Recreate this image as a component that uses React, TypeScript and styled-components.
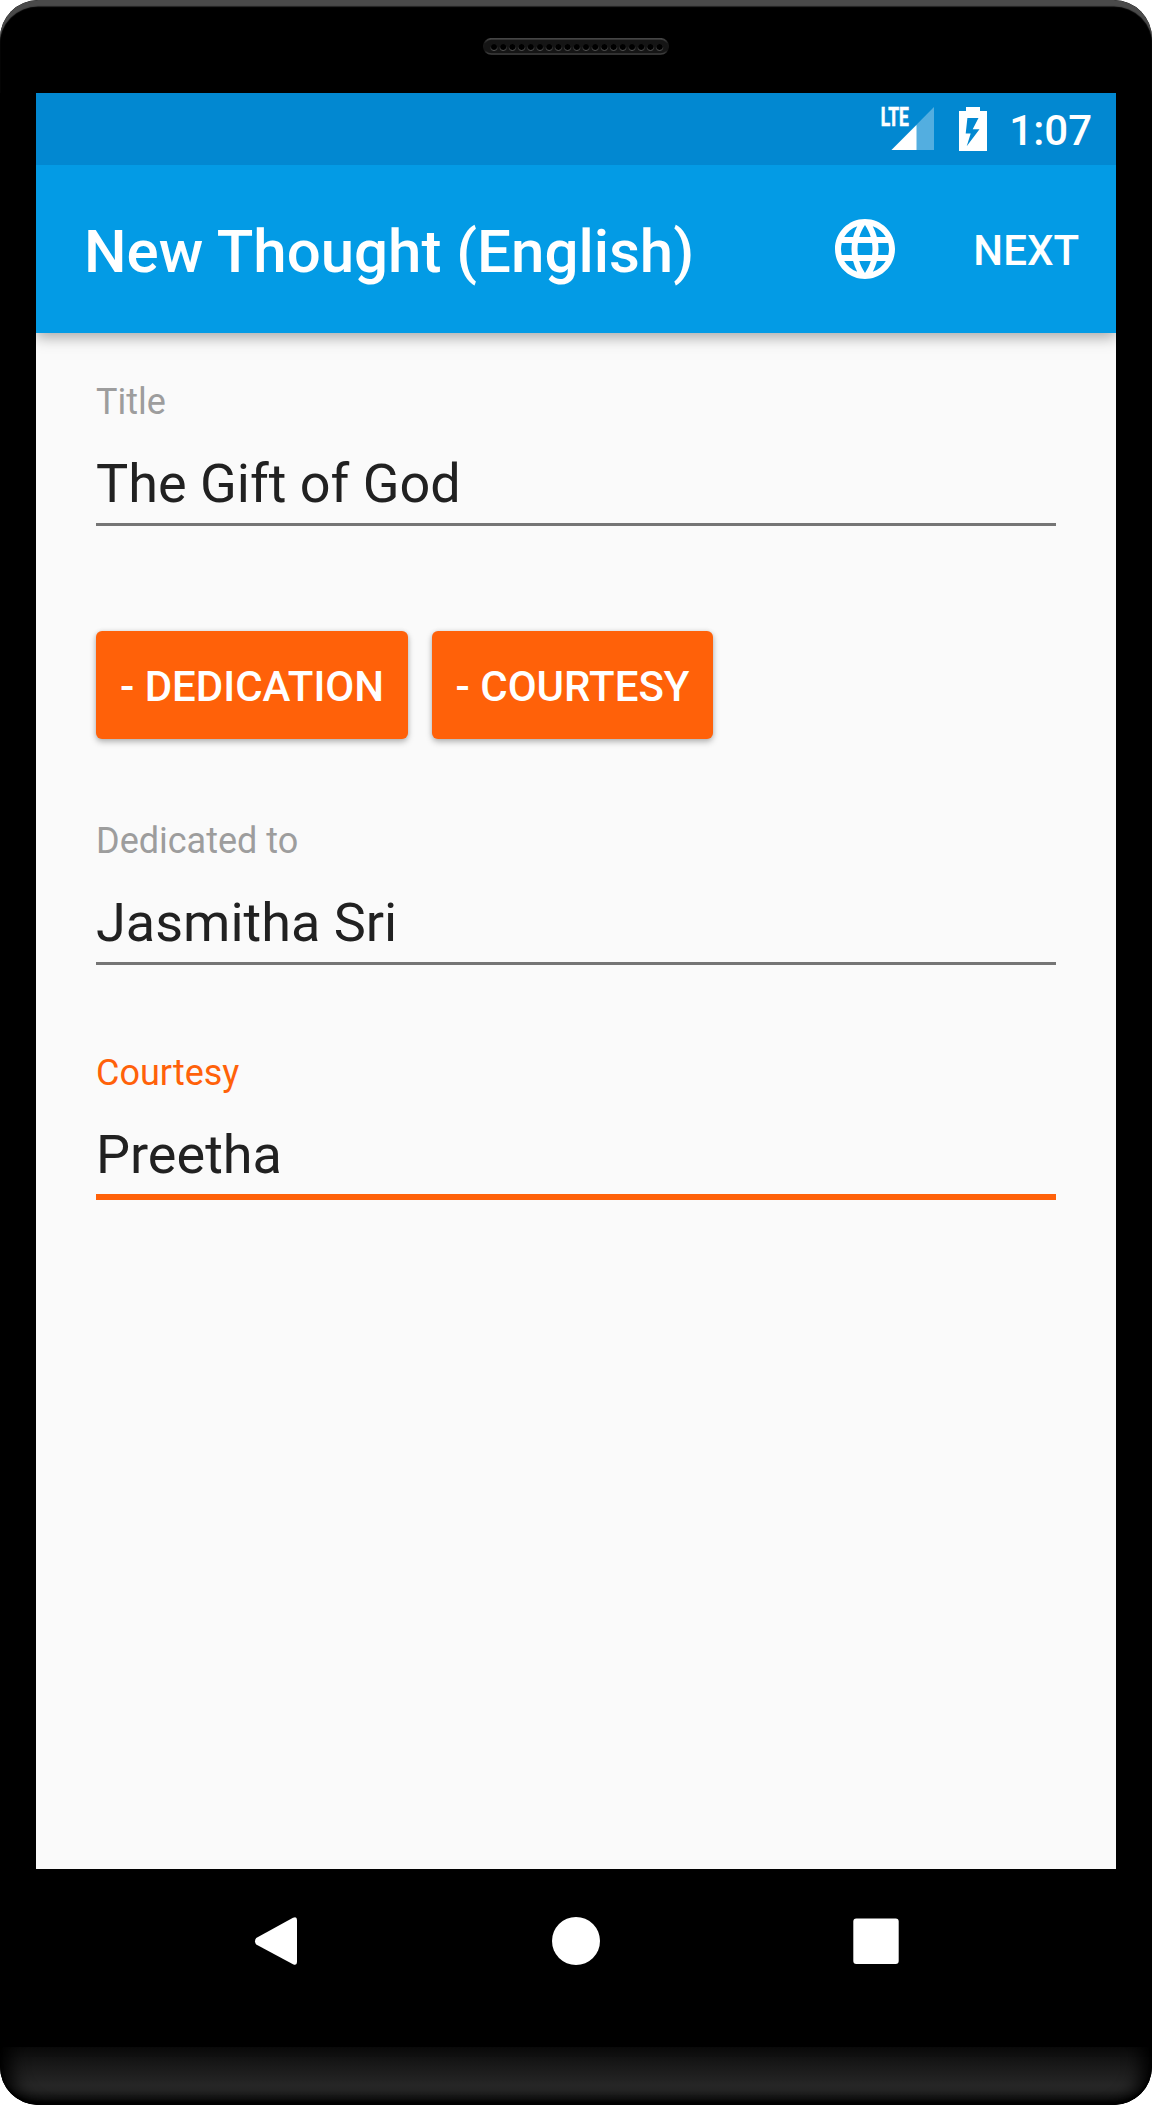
import React from "react";
import styled, { createGlobalStyle } from "styled-components";

const GlobalStyle = createGlobalStyle`
  * { box-sizing: border-box; }
  body { margin: 0; background: #fff; }
`;

const Phone = styled.div`
  width: 1152px;
  height: 2105px;
  display: flex;
  flex-direction: column;
  overflow: hidden;
  border-radius: 38px;
  background: #000;
  font-family: Roboto, sans-serif;
`;

const TopBezel = styled.div`
  height: 93px;
  flex: none;
  display: flex;
  justify-content: center;
  padding-top: 38px;
  border-radius: 38px 38px 0 0;
  box-shadow: inset 0 7px 1px -0.5px #4a4a4a;
`;

const Screen = styled.main`
  width: 1080px;
  height: 1776px;
  flex: none;
  margin: 0 auto;
  display: flex;
  flex-direction: column;
  background: #fafafa;
`;

const StatusBar = styled.div`
  height: 72px;
  display: flex;
  justify-content: flex-end;
  align-items: center;
  padding-right: 24px;
  background: #0288d1;
`;

const StatusIcons = styled.svg`
  flex: none;
  margin-right: 21px;
`;

const Clock = styled.span`
  padding-top: 4px;
  color: #fff;
  font-size: 42px;
  font-weight: 500;
  line-height: 50px;
`;

const AppBar = styled.header`
  height: 168px;
  display: flex;
  align-items: center;
  padding: 0 37px 0 48px;
  background: #039be5;
  color: #fff;
  box-shadow: 0 4px 14px rgba(0, 0, 0, 0.35);
  clip-path: inset(0 0 -24px 0);
`;

const Heading = styled.h1`
  flex: 1;
  margin: 0;
  padding-top: 6px;
  font-size: 60px;
  font-weight: 500;
  line-height: 70px;
  white-space: nowrap;
`;

const IconButton = styled.button`
  display: flex;
  margin: 0 72px 0 0;
  padding: 0;
  border: 0;
  background: none;
  color: inherit;
`;

const TextButton = styled.button`
  padding: 4px 0 0;
  border: 0;
  background: none;
  color: inherit;
  font: 500 42px/50px Roboto, sans-serif;
`;

const Form = styled.form`
  display: flex;
  flex-direction: column;
  padding: 47px 60px 0;
`;

const Field = styled.div<{ $active?: boolean; $space?: number }>`
  height: ${(p) => (p.$active ? 149 : 146)}px;
  margin-top: ${(p) => p.$space ?? 0}px;
  padding-top: 1px;
  display: flex;
  flex-direction: column;
  border-bottom: ${(p) => (p.$active ? "6px solid #ff6109" : "3px solid #757575")};
`;

const Label = styled.span<{ $active?: boolean }>`
  font-size: 36px;
  line-height: 42px;
  color: ${(p) => (p.$active ? "#ff6109" : "#9d9d9d")};
`;

const Value = styled.span`
  margin-top: 29px;
  font-size: 54px;
  line-height: 64px;
  color: #212121;
`;

const Actions = styled.div`
  display: flex;
  gap: 24px;
  margin-top: 105px;
`;

const RaisedButton = styled.button<{ $width: number }>`
  width: ${(p) => p.$width}px;
  height: 108px;
  padding: 4px 0 0;
  border: 0;
  border-radius: 6px;
  background: #ff6109;
  color: #fff;
  font: 500 42px/50px Roboto, sans-serif;
  white-space: nowrap;
  box-shadow: 0 3px 6px rgba(0, 0, 0, 0.27), 0 0 4px rgba(0, 0, 0, 0.1);
`;

const NavBar = styled.nav`
  height: 178px;
  flex: none;
  display: flex;
  justify-content: center;
  gap: 252px;
  padding-top: 48px;
`;

const Chin = styled.div`
  height: 58px;
  flex: none;
  border-radius: 0 0 38px 38px;
  background: linear-gradient(#0b0b0b 0, #1b1b1b 22px, #262626 38px, #242424 43px, #111 52px, #000 58px);
  box-shadow: inset 0 -3px 3px #000, inset 22px 0 18px -12px #000, inset -22px 0 18px -12px #000;
`;

const Speaker = () => (
  <svg width="186" height="17" viewBox="0 0 186 17">
    <defs>
      <linearGradient id="rim" x1="0" y1="0" x2="0" y2="1">
        <stop offset="0" stopColor="#454545" />
        <stop offset="0.3" stopColor="#181818" />
        <stop offset="0.75" stopColor="#141414" />
        <stop offset="1" stopColor="#414141" />
      </linearGradient>
      <linearGradient id="hole" x1="0" y1="0" x2="0" y2="1">
        <stop offset="0.45" stopColor="#181818" />
        <stop offset="1" stopColor="#5a5a5a" />
      </linearGradient>
    </defs>
    <rect x="0.8" y="0.8" width="184.4" height="15.2" rx="7.6" fill="#151515" stroke="url(#rim)" strokeWidth="1.7" />
    {Array.from({ length: 19 }, (_, i) => (
      <circle key={i} cx={11 + i * 9.2} cy="9" r="3.5" fill="#000" stroke="url(#hole)" />
    ))}
  </svg>
);

const GlobeIcon = () => (
  <svg width="72" height="72" viewBox="0 0 24 24" fill="currentColor">
    <path d="M11.99 2C6.47 2 2 6.48 2 12s4.47 10 9.99 10C17.52 22 22 17.52 22 12S17.52 2 11.99 2zm6.93 6h-2.95c-.32-1.25-.78-2.45-1.38-3.56 1.84.63 3.37 1.91 4.33 3.56zM12 4.04c.83 1.2 1.48 2.53 1.91 3.96h-3.82c.43-1.43 1.08-2.76 1.91-3.96zM4.26 14C4.1 13.36 4 12.69 4 12s.1-1.36.26-2h3.38c-.08.66-.14 1.32-.14 2s.06 1.34.14 2H4.26zm.82 2h2.95c.32 1.25.78 2.45 1.38 3.56-1.84-.63-3.37-1.9-4.33-3.56zm2.95-8H5.08c.96-1.66 2.49-2.93 4.33-3.56C8.81 5.55 8.35 6.75 8.03 8zM12 19.96c-.83-1.2-1.48-2.53-1.91-3.96h3.82c-.43 1.43-1.08 2.76-1.91 3.96zM14.34 14H9.66c-.09-.66-.16-1.32-.16-2s.07-1.35.16-2h4.68c.09.65.16 1.32.16 2s-.07 1.34-.16 2zm.25 5.56c.6-1.11 1.06-2.31 1.38-3.56h2.95c-.96 1.65-2.49 2.93-4.33 3.56zM16.36 14c.08-.66.14-1.32.14-2s-.06-1.34-.14-2h3.38c.16.64.26 1.31.26 2s-.1 1.36-.26 2h-3.38z" />
  </svg>
);

export default function App() {
  return (
    <>
      <GlobalStyle />
      <Phone>
        <TopBezel>
          <Speaker />
        </TopBezel>
        <Screen>
          <StatusBar>
            <StatusIcons width="110" height="60" viewBox="878 99 110 60" fill="#fff">
              <text x="880.8" y="126.4" fontFamily="Roboto" fontWeight="700" fontSize="26" stroke="#fff" strokeWidth="0.7" textLength="28" lengthAdjust="spacingAndGlyphs">LTE</text>
              <path d="M934 107V150H891.5Z" opacity="0.32" />
              <path d="M916.5 125V150H891.5Z" />
              <path fillRule="evenodd" d="M966 107H980V111H987V151H959V111H966ZM967.4 118L965.7 133.5H970.7L966.7 146.3L979.5 129.2H972.7L978.5 118Z" />
            </StatusIcons>
            <Clock>1:07</Clock>
          </StatusBar>
          <AppBar>
            <Heading>New Thought (English)</Heading>
            <IconButton type="button" aria-label="Language">
              <GlobeIcon />
            </IconButton>
            <TextButton type="button">NEXT</TextButton>
          </AppBar>
          <Form>
            <Field>
              <Label>Title</Label>
              <Value>The Gift of God</Value>
            </Field>
            <Actions>
              <RaisedButton type="button" $width={312}>- DEDICATION</RaisedButton>
              <RaisedButton type="button" $width={281}>- COURTESY</RaisedButton>
            </Actions>
            <Field $space={80}>
              <Label>Dedicated to</Label>
              <Value>Jasmitha Sri</Value>
            </Field>
            <Field $active $space={86}>
              <Label $active>Courtesy</Label>
              <Value>Preetha</Value>
            </Field>
          </Form>
        </Screen>
        <NavBar>
          <svg width="48" height="48" viewBox="-3 0 48 48" fill="#fff">
            <path d="M1.2 21L38 0.8Q42 -1 42 3V45Q42 49 38 47.2L1.2 27.5Q-1.2 24.2 1.2 21Z" />
          </svg>
          <svg width="48" height="48" viewBox="0 0 48 48" fill="#fff">
            <circle cx="24" cy="24" r="24" />
          </svg>
          <svg width="48" height="48" viewBox="0 0 48 48" fill="#fff">
            <rect x="1.3" y="1.5" width="45.4" height="45.4" rx="3" />
          </svg>
        </NavBar>
        <Chin />
      </Phone>
    </>
  );
}
